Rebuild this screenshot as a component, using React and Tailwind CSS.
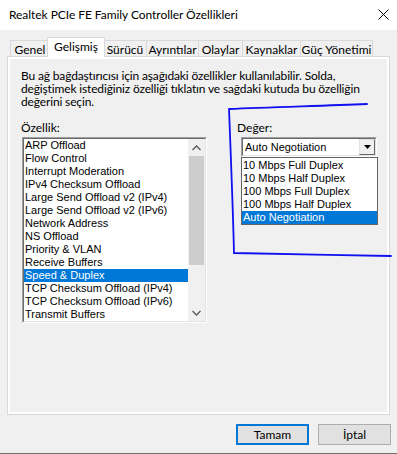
import React from "react";

const tabs = [
  { label: "Genel", w: "w-[40px]" },
  { label: "Gelişmiş", w: "w-[58px]", sel: true },
  { label: "Sürücü", w: "w-[44px]" },
  { label: "Ayrıntılar", w: "w-[53px]" },
  { label: "Olaylar", w: "w-[45px]" },
  { label: "Kaynaklar", w: "w-[59px]" },
  { label: "Güç Yönetimi", w: "w-[73px]" },
];

const props = [
  "ARP Offload",
  "Flow Control",
  "Interrupt Moderation",
  "IPv4 Checksum Offload",
  "Large Send Offload v2 (IPv4)",
  "Large Send Offload v2 (IPv6)",
  "Network Address",
  "NS Offload",
  "Priority & VLAN",
  "Receive Buffers",
  "Speed & Duplex",
  "TCP Checksum Offload (IPv4)",
  "TCP Checksum Offload (IPv6)",
  "Transmit Buffers",
];

const values = [
  "10 Mbps Full Duplex",
  "10 Mbps Half Duplex",
  "100 Mbps Full Duplex",
  "100 Mbps Half Duplex",
  "Auto Negotiation",
];

export default function App() {
  return (
    <div className="relative w-[397px] h-[454px] bg-[#f0f0f0] overflow-hidden flex flex-col font-['Lato',sans-serif] text-[12px] leading-[13px] text-black">
      {/* Title bar */}
      <div className="h-[30px] shrink-0 bg-white flex items-center pl-[9px] pr-[8px] pb-[1px]">
        <span className="whitespace-nowrap tracking-[-0.05px]">Realtek PCIe FE Family Controller Özellikleri</span>
        <svg className="ml-auto" width="11" height="11" viewBox="0 0 11 11">
          <path d="M0.5 0.5 L10.5 10.5 M10.5 0.5 L0.5 10.5" stroke="#000" strokeWidth="1" fill="none" />
        </svg>
      </div>

      {/* Tabs */}
      <div className="flex items-end h-[26px] pt-[7px] pl-[10px] shrink-0">
        {tabs.map((t) =>
          t.sel ? (
            <div
              key={t.label}
              className={`${t.w} h-[20px] -mx-[2px] -mb-px relative z-10 bg-white border border-b-0 border-[#d9d9d9] flex justify-center pt-[2px] whitespace-nowrap`}
            >
              {t.label}
            </div>
          ) : (
            <div
              key={t.label}
              className={`${t.w} h-[16px] -mr-px bg-[#f0f0f0] border border-b-0 border-[#d9d9d9] flex justify-center pt-[2px] whitespace-nowrap`}
            >
              {t.label}
            </div>
          )
        )}
      </div>

      {/* Panel */}
      <div className="mx-[7px] h-[359px] shrink-0 border border-[#d9d9d9] bg-white p-[2px]">
        <div className="h-full bg-[#f0f0f0] pl-[11px] pt-[10px] flex flex-col">
          <p className="whitespace-nowrap tracking-[-0.15px]">
            Bu ağ bağdaştırıcısı için aşağıdaki özellikler kullanılabilir. Solda,
            <br />
            değiştimek istediğiniz özelliği tıklatın ve sağdaki kutuda bu özelliğin
            <br />
            değerini seçin.
          </p>
          <div className="flex mt-[13px]">
            {/* Left column */}
            <div className="flex flex-col w-[216px]">
              <div>Özellik:</div>
              <div className="mt-[3px] ml-[1px] w-[185px] h-[186px] border border-t-[#a0a0a0] border-l-[#a0a0a0] border-r-white border-b-white">
                <div className="h-full border border-t-[#696969] border-l-[#696969] border-r-[#e3e3e3] border-b-[#e3e3e3] bg-white flex font-['Liberation_Sans',sans-serif] text-[11px]">
                  <div className="flex-1 flex flex-col">
                    {props.map((p) => (
                      <div
                        key={p}
                        className={`h-[13px] pl-[1px] whitespace-nowrap ${
                          p === "Speed & Duplex" ? "bg-[#0078d7] text-white" : ""
                        }`}
                      >
                        {p}
                      </div>
                    ))}
                  </div>
                  <div className="w-[17px] bg-[#f0f0f0] flex flex-col">
                    <div className="h-[17px] flex items-center justify-center">
                      <svg width="9" height="6" viewBox="0 0 9 6">
                        <path d="M0.5 5 L4.5 1 L8.5 5" stroke="#606060" strokeWidth="1.5" fill="none" />
                      </svg>
                    </div>
                    <div className="h-[109px] mx-[1px] bg-[#cdcdcd]" />
                    <div className="flex-1" />
                    <div className="h-[17px] flex items-center justify-center">
                      <svg width="9" height="6" viewBox="0 0 9 6">
                        <path d="M0.5 1 L4.5 5 L8.5 1" stroke="#606060" strokeWidth="1.5" fill="none" />
                      </svg>
                    </div>
                  </div>
                </div>
              </div>
            </div>

            {/* Right column */}
            <div className="flex flex-col">
              <div>Değer:</div>
              <div className="mt-[3px] ml-[4px] w-[136px] h-[20px] border border-t-[#a0a0a0] border-l-[#a0a0a0] border-r-white border-b-white font-['Liberation_Sans',sans-serif] text-[11px]">
                <div className="h-full border border-t-[#696969] border-l-[#696969] border-r-[#e3e3e3] border-b-[#e3e3e3] bg-white flex items-center">
                  <span className="pl-[2px] whitespace-nowrap">Auto Negotiation</span>
                  <div className="ml-auto w-[16px] h-[16px] border border-t-[#e3e3e3] border-l-[#e3e3e3] border-r-[#696969] border-b-[#696969] bg-[#f0f0f0] flex items-center justify-center">
                    <svg width="7" height="4" viewBox="0 0 7 4">
                      <path d="M0 0 L7 0 L3.5 4 Z" fill="#000" />
                    </svg>
                  </div>
                </div>
              </div>
              <div className="ml-[4px] w-[137px] border border-[#646464] bg-white pt-[1px] flex flex-col font-['Liberation_Sans',sans-serif] text-[11px]">
                {values.map((v) => (
                  <div
                    key={v}
                    className={`h-[13px] pl-[1px] whitespace-nowrap ${
                      v === "Auto Negotiation" ? "bg-[#0078d7] text-white" : ""
                    }`}
                  >
                    {v}
                  </div>
                ))}
              </div>
            </div>
          </div>
        </div>
      </div>

      {/* Buttons */}
      <div className="flex justify-end gap-[9px] pr-[6px] mt-[9px] shrink-0">
        <button className="w-[73px] h-[21px] bg-[#e1e1e1] border-2 border-[#0078d7] flex items-center justify-center">
          Tamam
        </button>
        <button className="w-[73px] h-[21px] bg-[#e1e1e1] border border-[#adadad] flex items-center justify-center">
          İptal
        </button>
      </div>
      <div className="flex-1" />
      <div className="h-px bg-[#6e6e6e] shrink-0" />

      {/* Hand-drawn annotation */}
      <svg
        className="absolute inset-0 pointer-events-none"
        width="397"
        height="454"
        viewBox="0 0 397 454"
      >
        <path
          d="M229 109 C 270 107, 320 106, 367 104 M229 109 C 231 160, 233 210, 234 253 C 280 254, 340 255, 391 256"
          stroke="#1010f0"
          strokeWidth="1.8"
          fill="none"
          strokeLinecap="round"
        />
      </svg>
    </div>
  );
}
